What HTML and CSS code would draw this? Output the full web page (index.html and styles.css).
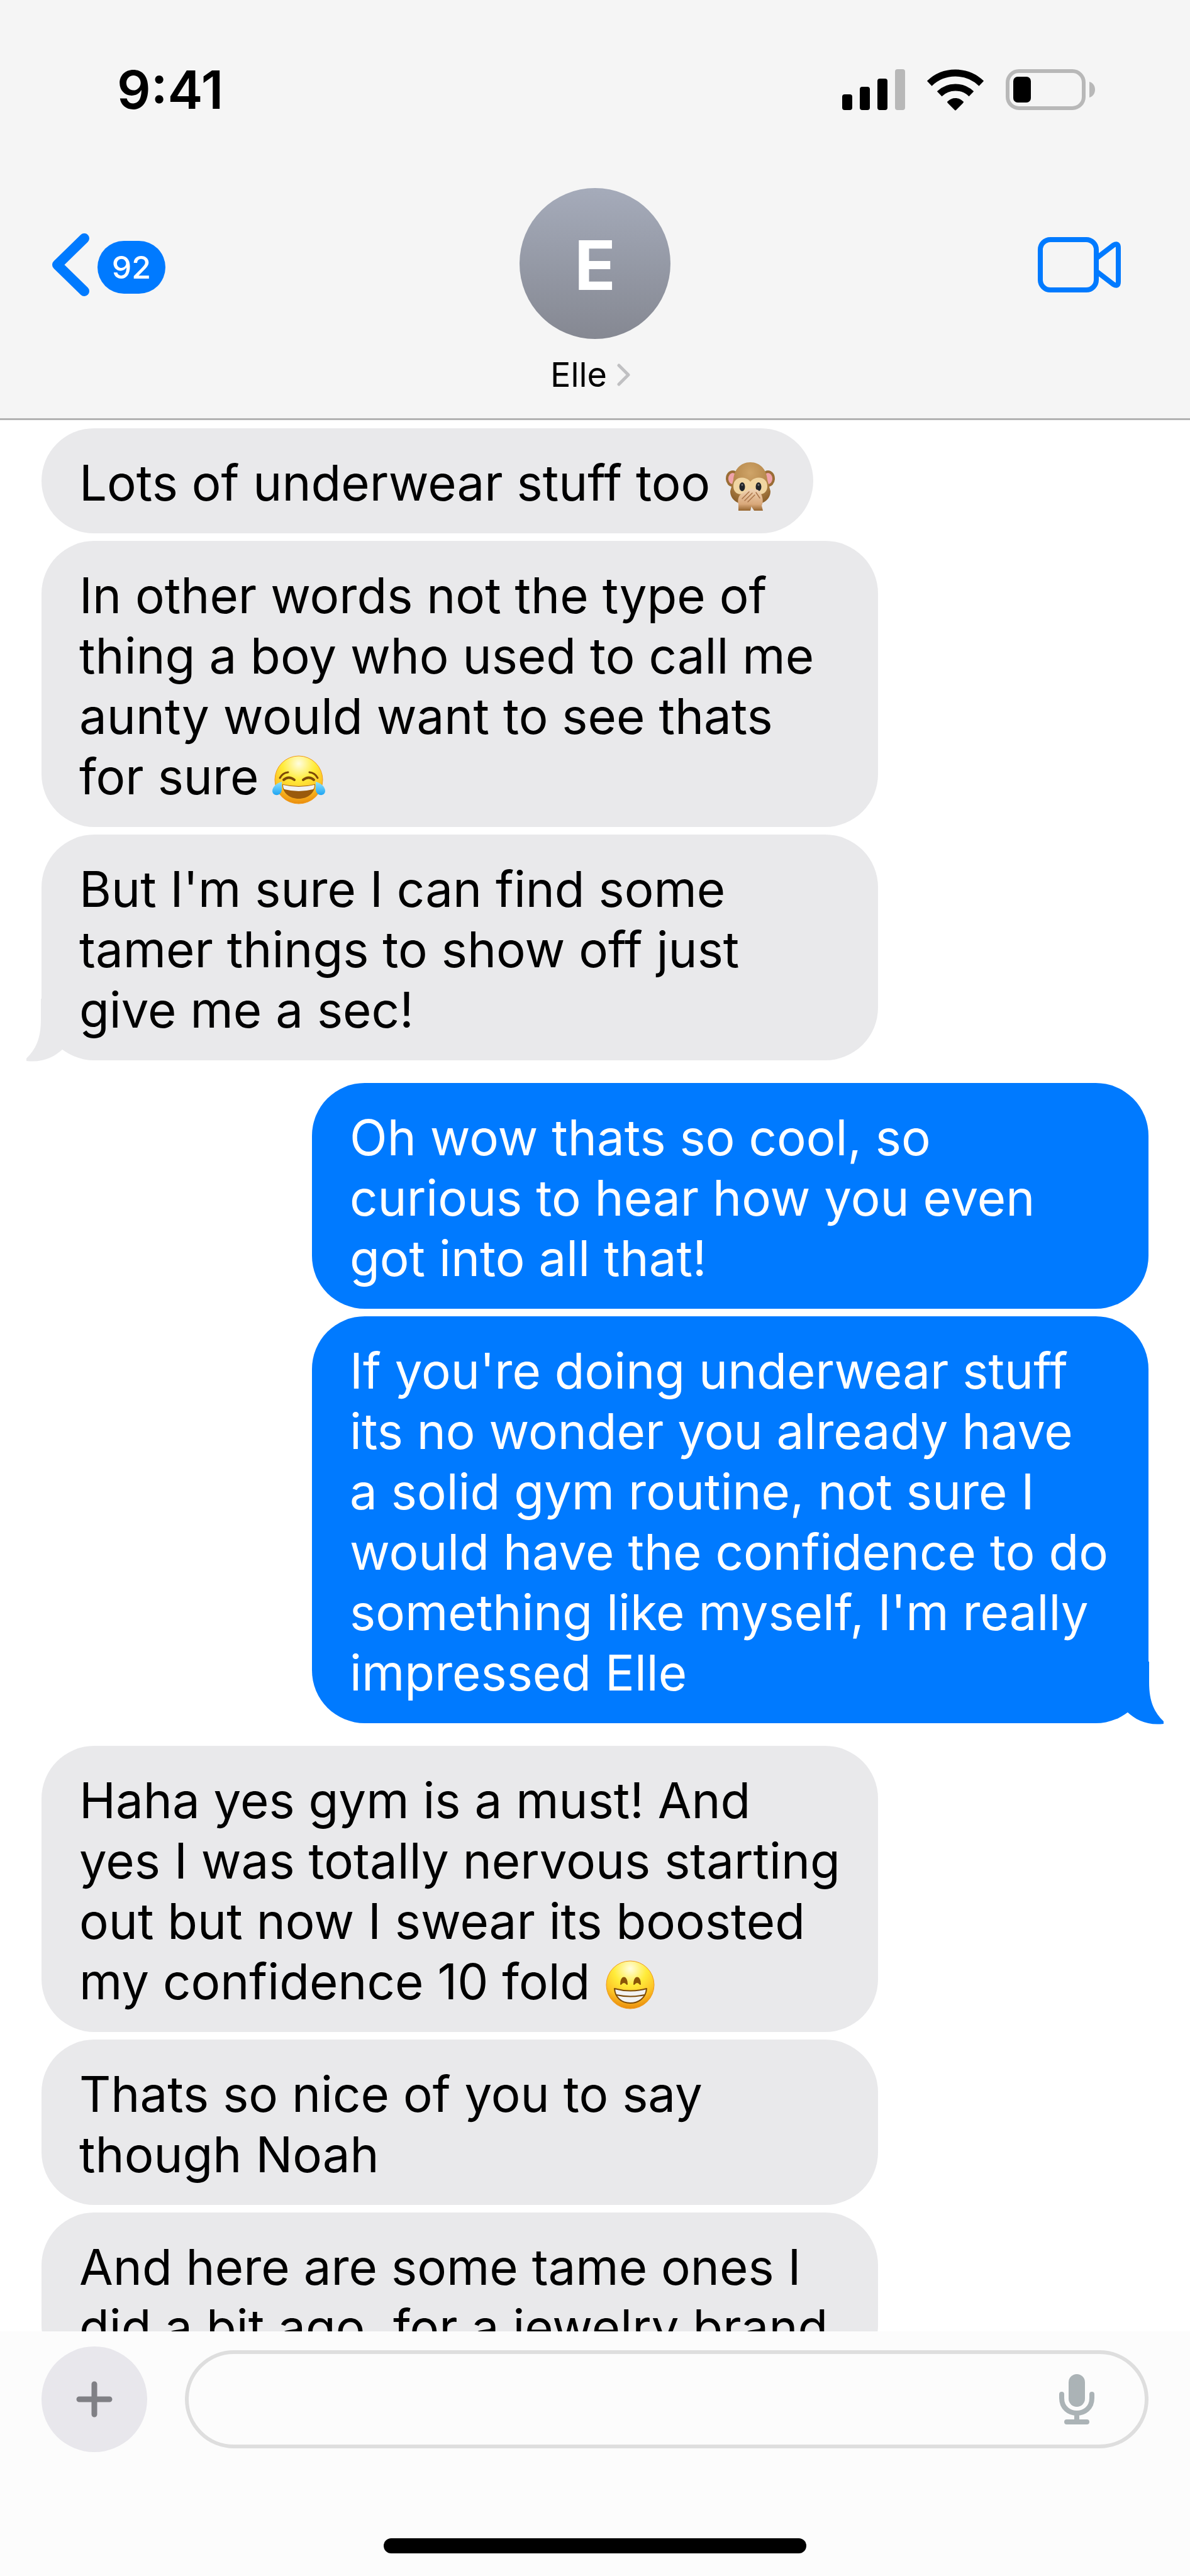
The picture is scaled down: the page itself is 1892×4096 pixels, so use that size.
FILE: index.html
```html
<!DOCTYPE html>
<html lang="en">
<head>
  <meta charset="UTF-8" />
  <meta name="viewport" content="width=device-width, initial-scale=1.0"/>
  <title>Messages – Elle</title>
  <link rel="stylesheet" href="styles.css">
</head>
<body>
  <!-- shared shapes -->
  <svg class="defs" width="0" height="0" aria-hidden="true">
    <defs>
      <radialGradient id="face" cx="50%" cy="16%" r="86%">
        <stop offset="0" stop-color="#fffde0"/>
        <stop offset="0.4" stop-color="#ffec3a"/>
        <stop offset="0.7" stop-color="#fdc527"/>
        <stop offset="1" stop-color="#e8860a"/>
      </radialGradient>
      <linearGradient id="tear" x1="0" y1="0" x2="0" y2="1">
        <stop offset="0" stop-color="#8fe3ff"/>
        <stop offset="1" stop-color="#1ea4f2"/>
      </linearGradient>
      <radialGradient id="fur" cx="50%" cy="25%" r="75%">
        <stop offset="0" stop-color="#cfa468"/>
        <stop offset="0.6" stop-color="#b5874b"/>
        <stop offset="1" stop-color="#8a5f2a"/>
      </radialGradient>
      <linearGradient id="hand" x1="0" y1="0" x2="0" y2="1">
        <stop offset="0" stop-color="#f0d3b4"/>
        <stop offset="0.7" stop-color="#d9a87a"/>
        <stop offset="1" stop-color="#96652f"/>
      </linearGradient>
      <symbol id="tail" viewBox="0 0 66 100">
        <path d="M0 0H43V33C43 65 52 81 66 95V99C40 102 22 93 8 80H0Z" fill="currentColor"/>
      </symbol>
    </defs>
  </svg>

  <div class="phone">
    <header class="top">
      <div class="status">
        <span class="time">9:41</span>
        <div class="status-icons">
          <svg width="100" height="66" viewBox="0 0 100 66" role="img" aria-label="Signal">
            <rect x="0" y="40" width="16" height="25" rx="4"/>
            <rect x="28" y="28" width="16" height="37" rx="4"/>
            <rect x="56" y="15" width="16" height="50" rx="4"/>
            <rect x="84" y="0" width="16" height="65" rx="4" fill="#b8b8b8"/>
          </svg>
          <svg width="92" height="66" viewBox="0 0 92 66" role="img" aria-label="Wi-Fi">
            <path d="M4.700 22.700A59.500 59.500 0 0 1 87.300 22.700M20.600 39.200A36.500 36.500 0 0 1 71.400 39.200" fill="none" stroke="#000" stroke-width="11"/>
            <path d="M46 46C51 46 55 48 58 51Q60 52 58 54L47 65Q46 66 45 65L34 54Q32 52 34 51C37 48 41 46 46 46Z"/>
          </svg>
          <svg width="142" height="66" viewBox="0 0 142 66" role="img" aria-label="Battery">
            <rect x="3" y="3" width="121" height="59" rx="18" fill="none" stroke="#b8b8b8" stroke-width="6"/>
            <rect x="12" y="12" width="28" height="41" rx="7"/>
            <path d="M133 20C145 23 145 42 133 45Z" fill="#b8b8b8"/>
          </svg>
        </div>
      </div>

      <div class="nav">
        <button class="back" aria-label="Back">
          <svg width="60" height="100" viewBox="0 0 60 100">
            <path d="M52 8L9 50L52 92" fill="none" stroke="#007aff" stroke-width="16" stroke-linecap="round" stroke-linejoin="round"/>
          </svg>
          <span class="badge">92</span>
        </button>
        <button class="contact">
          <span class="avatar">E</span>
          <span class="name">Elle
            <svg width="22" height="36" viewBox="0 0 22 36">
              <path d="M3 3L18 18L3 33" fill="none" stroke="#c0c0c2" stroke-width="5" stroke-linecap="round" stroke-linejoin="round"/>
            </svg>
          </span>
        </button>
        <button class="video" aria-label="Video call">
          <svg width="132" height="88" viewBox="0 0 132 88">
            <rect x="4" y="4" width="89" height="80" rx="16" fill="none" stroke="#007aff" stroke-width="8"/>
            <path d="M94 33L120 13Q128 8 128 17V71Q128 80 120 75L94 55" fill="none" stroke="#007aff" stroke-width="8" stroke-linejoin="round"/>
          </svg>
        </button>
      </div>
    </header>

    <main class="chat">
      <div class="msg in">Lots of underwear stuff too <svg class="emoji" viewBox="0 0 84 80" role="img" aria-label="🙊">
        <ellipse cx="14" cy="27" rx="11" ry="13" fill="#9a6d35"/><ellipse cx="70" cy="27" rx="11" ry="13" fill="#9a6d35"/>
        <ellipse cx="14" cy="27" rx="7" ry="9" fill="#f0a3aa"/><ellipse cx="70" cy="27" rx="7" ry="9" fill="#f0a3aa"/>
        <path d="M42 1C58 1 68 13 69 29L74 47C74 62 60 69 42 69S10 62 10 47L15 29C16 13 26 1 42 1Z" fill="url(#fur)"/>
        <path d="M42 32C35 22 15 23 15 39C15 52 27 54 33 50L42 45L51 50C57 54 69 52 69 39C69 23 49 22 42 32Z" fill="#f0d5a2"/>
        <ellipse cx="29" cy="40" rx="4.500" ry="7" fill="#20242a"/><ellipse cx="55" cy="40" rx="4.500" ry="7" fill="#20242a"/>
        <circle cx="29" cy="37" r="1.500" fill="#777"/><circle cx="55" cy="37" r="1.500" fill="#777"/>
        <path d="M62 78H48L38 63L46 46C52 42 56 46 58 50C62 56 63 64 60 70Z" fill="url(#hand)"/>
        <path d="M23 78V68C21 60 24 52 30 50L40 44C46 41 52 45 50 51C53 56 48 63 44 70L42 78Z" fill="url(#hand)"/>
        <path d="M29 59L40 48M33 62L45 50M38 64L49 53M51 49L57 58" fill="none" stroke="#aa7449" stroke-width="1.500" stroke-linecap="round"/>
      </svg></div>
      <div class="msg in">In other words not the type of thing a boy who used to call me aunty would want to see thats for sure <svg class="emoji" viewBox="0 0 84 80" role="img" aria-label="😂">
        <circle cx="42" cy="39" r="38" fill="url(#face)" stroke="#f09a1a" stroke-width="1"/>
        <path d="M12 36Q16 28 25 27M59 27Q68 28 72 36" fill="none" stroke="#7c4a08" stroke-width="3" stroke-linecap="round"/>
        <path d="M18 39Q26 32 35 39M49 39Q58 32 66 39" fill="none" stroke="#7c4a08" stroke-width="4" stroke-linecap="round"/>
        <path d="M16 46Q42 52 68 46C68 60 56 69 42 69S16 60 16 46Z" fill="#9a5a0c"/>
        <path d="M17 47Q42 53 67 47Q67 52 65 54Q42 60 19 54Q17 52 17 47Z" fill="#f2f2f2"/>
        <path d="M15 42C7 44 0 50 0 57C1 66 14 65 15 55Z" fill="url(#tear)"/>
        <path d="M69 42C77 44 84 50 84 57C83 66 70 65 69 55Z" fill="url(#tear)"/>
      </svg></div>
      <div class="msg in last">But I'm sure I can find some tamer things to show off just give me a sec!<svg class="tail"><use href="#tail"/></svg></div>

      <div class="msg out">Oh wow thats so cool, so curious to hear how you even got into all that!</div>
      <div class="msg out last">If you're doing underwear stuff its no wonder you already have a solid gym routine, not sure I would have the confidence to do something like myself, I'm really impressed Elle<svg class="tail"><use href="#tail"/></svg></div>

      <div class="msg in">Haha yes gym is a must! And yes I was totally nervous starting out but now I swear its boosted my confidence 10 fold <svg class="emoji" viewBox="0 0 84 80" role="img" aria-label="😁">
        <circle cx="42" cy="39" r="38" fill="url(#face)" stroke="#f09a1a" stroke-width="1"/>
        <path d="M27 38C27 24 37 24 37 38Q32 32 27 38ZM48 38C48 24 58 24 58 38Q53 32 48 38Z" fill="#8a5508" stroke="#8a5508" stroke-width="2" stroke-linejoin="round"/>
        <path d="M17 45Q42 52 68 45C67 59 56 68 42 68S18 59 17 45Z" fill="#f2f2f2" stroke="#7c4a08" stroke-width="2" stroke-linejoin="round"/>
        <path d="M20 55Q42 60 65 55" fill="none" stroke="#7c4a08" stroke-width="2"/>
      </svg></div>
      <div class="msg in">Thats so nice of you to say though Noah</div>
      <div class="msg in">And here are some tame ones I did a bit ago, for a jewelry brand</div>
    </main>

    <footer class="bottom">
      <div class="compose">
        <button class="plus" aria-label="Add">
          <svg width="58" height="58" viewBox="0 0 58 58">
            <path d="M29 5V53M5 29H53" stroke="#808085" stroke-width="9" stroke-linecap="round"/>
          </svg>
        </button>
        <div class="field">
          <input type="text" aria-label="Message">
          <button class="mic" aria-label="Dictate">
            <svg width="56" height="80" viewBox="0 0 56 80">
              <rect x="15" y="0" width="26" height="52" rx="13" fill="#abb3b6"/>
              <path d="M4 32V38C4 70 52 70 52 38V32M28 64V76M12 76H44" fill="none" stroke="#abb3b6" stroke-width="8" stroke-linecap="round"/>
            </svg>
          </button>
        </div>
      </div>
      <div class="home-bar"></div>
    </footer>
  </div>
</body>
</html>
```
FILE: styles.css
```css
* {
  box-sizing: border-box;
}

body {
  margin: 0;
  background: #fff;
  font-family: Inter, sans-serif;
  color: #000;
}

button {
  border: none;
  padding: 0;
  background: none;
  font-family: inherit;
  color: inherit;
  cursor: pointer;
}

svg {
  display: block;
}

.defs {
  position: absolute;
}

.phone {
  height: 100vh;
  display: flex;
  flex-direction: column;
}

/* header */
.top {
  flex: none;
  background: #f5f5f5;
  border-bottom: 3px solid #b2b2b2;
}

.status {
  display: flex;
  justify-content: space-between;
  align-items: center;
  padding: 91px 151px 0 186px;
}

.time {
  font-size: 84px;
  line-height: 103px;
  font-weight: 600;
}

.status-icons {
  display: flex;
  gap: 34px;
}

.nav {
  display: grid;
  grid-template-columns: 1fr auto 1fr;
  padding: 105px 82px 36px;
}

.back {
  justify-self: start;
  align-self: start;
  display: flex;
  align-items: center;
  gap: 13px;
  margin-top: 72px;
}

.badge {
  min-width: 108px;
  height: 84px;
  border-radius: 42px;
  background: #007aff;
  color: #fff;
  font-size: 50px;
  line-height: 84px;
  font-weight: 500;
  margin-top: 8px;
}

.contact {
  display: flex;
  flex-direction: column;
  align-items: center;
}

.avatar {
  width: 240px;
  height: 240px;
  border-radius: 50%;
  background: linear-gradient(#a5abba, #858892);
  color: #fff;
  font-size: 108px;
  line-height: 246px;
  font-weight: 700;
}

.name {
  display: flex;
  align-items: center;
  gap: 16px;
  margin-top: 24px;
  padding-right: 14px;
  font-size: 54px;
  line-height: 66px;
}

.video {
  justify-self: end;
  align-self: start;
  margin: 78px 28px 0 0;
}

/* messages */
.chat {
  flex: 1;
  min-height: 0;
  overflow: hidden;
  display: flex;
  flex-direction: column;
  align-items: flex-start;
  gap: 12px;
  padding: 13px 66px 0;
}

.msg {
  position: relative;
  flex: none;
  max-width: 1330px;
  padding: 39px 58px 32px 60px;
  border-radius: 84px;
  font-size: 78px;
  line-height: 96px;
}

.in {
  background: #e9e9eb;
}

.out {
  align-self: flex-end;
  background: #007aff;
  color: #fff;
}

.last {
  margin-bottom: 24px;
}

.emoji {
  display: inline-block;
  width: 84px;
  height: 80px;
  vertical-align: -18px;
}

.tail {
  position: absolute;
  right: -24px;
  bottom: -2px;
  width: 66px;
  height: 100px;
  color: #007aff;
}

.in .tail {
  left: -24px;
  right: auto;
  color: #e9e9eb;
  transform: scaleX(-1);
}

/* message bar */
.bottom {
  flex: none;
  background: #fcfcfc;
  padding: 24px 66px 36px;
}

.compose {
  display: flex;
  align-items: center;
  gap: 60px;
}

.plus {
  flex: none;
  width: 168px;
  height: 168px;
  border-radius: 50%;
  background: #e8e7ec;
  display: grid;
  place-items: center;
}

.field {
  flex: 1;
  display: flex;
  align-items: center;
  height: 156px;
  border: 6px solid #dedede;
  border-radius: 78px;
  padding: 0 80px 0 54px;
}

.field input {
  flex: 1;
  min-width: 0;
  border: none;
  outline: none;
  background: none;
  font-family: inherit;
  font-size: 78px;
}

.home-bar {
  width: 672px;
  height: 24px;
  margin: 137px auto 0;
  border-radius: 12px;
  background: #000;
}
```
